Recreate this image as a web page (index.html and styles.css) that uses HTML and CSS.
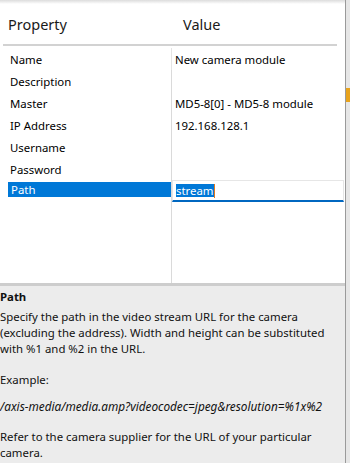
FILE: index.html
```html
<!DOCTYPE html>
<html lang="en">
<head>
    <meta charset="UTF-8">
    <title>Camera module properties</title>
    <link rel="stylesheet" href="styles.css">
</head>
<body>
    <div class="window">
        <div class="main">
            <div class="grid">
                <div class="head">
                    <div class="head-name">Property</div>
                    <div class="head-val">Value</div>
                </div>
                <div class="head-line"></div>
                <div class="rows">
                    <div class="row"><div class="name">Name</div><div class="val">New camera module</div></div>
                    <div class="row"><div class="name">Description</div><div class="val"></div></div>
                    <div class="row"><div class="name">Master</div><div class="val">MD5-8[0] - MD5-8 module</div></div>
                    <div class="row"><div class="name">IP Address</div><div class="val">192.168.128.1</div></div>
                    <div class="row"><div class="name">Username</div><div class="val"></div></div>
                    <div class="row"><div class="name">Password</div><div class="val"></div></div>
                    <div class="row">
                        <div class="name"><span class="selected">Path</span></div>
                        <div class="val"><div class="editor"><span class="sel-text">stream</span><span class="caret"></span></div></div>
                    </div>
                    <div class="row filler"><div class="name"></div><div class="val"></div></div>
                </div>
            </div>
            <div class="help">
                <div class="help-title">Path</div>
                <p>Specify the path in the video stream URL for the camera (excluding the address). Width and height can be substituted with %1 and %2 in the URL.</p>
                <p class="short">Example:</p>
                <p class="code">/axis-media/media.amp?videocodec=jpeg&amp;resolution=%1x%2</p>
                <p>Refer to the camera supplier for the URL of your particular camera.</p>
            </div>
        </div>
        <div class="scroll"><div class="thumb"></div></div>
    </div>
</body>
</html>
```

FILE: styles.css
```css
body {
    margin: 0;
    font-family: "Noto Sans", "Open Sans", sans-serif;
    font-size: 11.4px;
    color: #000;
    background: #fff;
}
.window {
    display: flex;
    height: 463px;
    overflow: hidden;
}
.main {
    width: 345px;
    display: flex;
    flex-direction: column;
}
.grid {
    height: 283px;
    flex-shrink: 0;
    display: flex;
    flex-direction: column;
    background: linear-gradient(#dcdcdc, #fff 4px);
    border-bottom: 3px solid #cdcdcd;
}
.head {
    height: 44px;
    display: flex;
    align-items: center;
    font-size: 14.5px;
    color: #1a1a1a;
    padding-top: 3px;
    box-sizing: border-box;
}
.head-name {
    width: 175px;
    padding-left: 8px;
    box-sizing: border-box;
}
.head-val {
    padding-left: 8px;
}
.head-line {
    height: 2px;
    margin-left: 3px;
    width: 334px;
    background: #d2d2d2;
}
.rows {
    flex: 1;
    display: flex;
    flex-direction: column;
    padding-top: 2px;
}
.row {
    display: flex;
    height: 22px;
}
.row.filler {
    flex: 1;
}
.name {
    width: 163px;
    margin-left: 8px;
    display: flex;
    align-items: center;
    padding-left: 2px;
    box-sizing: border-box;
}
.val {
    flex: 1;
    border-left: 1px solid #dadada;
    display: flex;
    align-items: center;
    padding-left: 3px;
}
.row:first-child .val {
    border-left-color: #e4e4e4;
}
.selected {
    background: #0078d7;
    color: #fff;
    margin-left: -2px;
    padding-left: 3px;
    width: 160px;
    height: 15px;
    line-height: 15px;
    margin-top: -3px;
}
.editor {
    margin-left: -3px;
    width: 172px;
    height: 22px;
    box-sizing: border-box;
    border: 1px solid #e6e6e6;
    border-bottom: 2px solid #0067c0;
    display: flex;
    align-items: center;
    padding-left: 3px;
}
.sel-text {
    background: #0078d7;
    color: #fff;
    line-height: 13px;
    height: 13px;
}
.caret {
    width: 1px;
    height: 14px;
    background: #e07a1f;
}
.help {
    flex: 1;
    background: #ececec;
    padding: 3px 0 0 0;
    line-height: 16px;
    color: #111;
}
.help-title {
    font-weight: bold;
    margin-bottom: 4px;
}
.help p {
    margin: 0 0 15px 0;
}
.help p.short {
    margin-bottom: 10px;
}
.help p.code {
    font-style: italic;
    font-size: 11.8px;
}
.scroll {
    width: 5px;
    background: #e6e6e6;
    border-left: 1px solid #9a9a9a;
    box-sizing: border-box;
}
.thumb {
    margin-top: 88px;
    height: 14px;
    background: #e8a31c;
}
```
